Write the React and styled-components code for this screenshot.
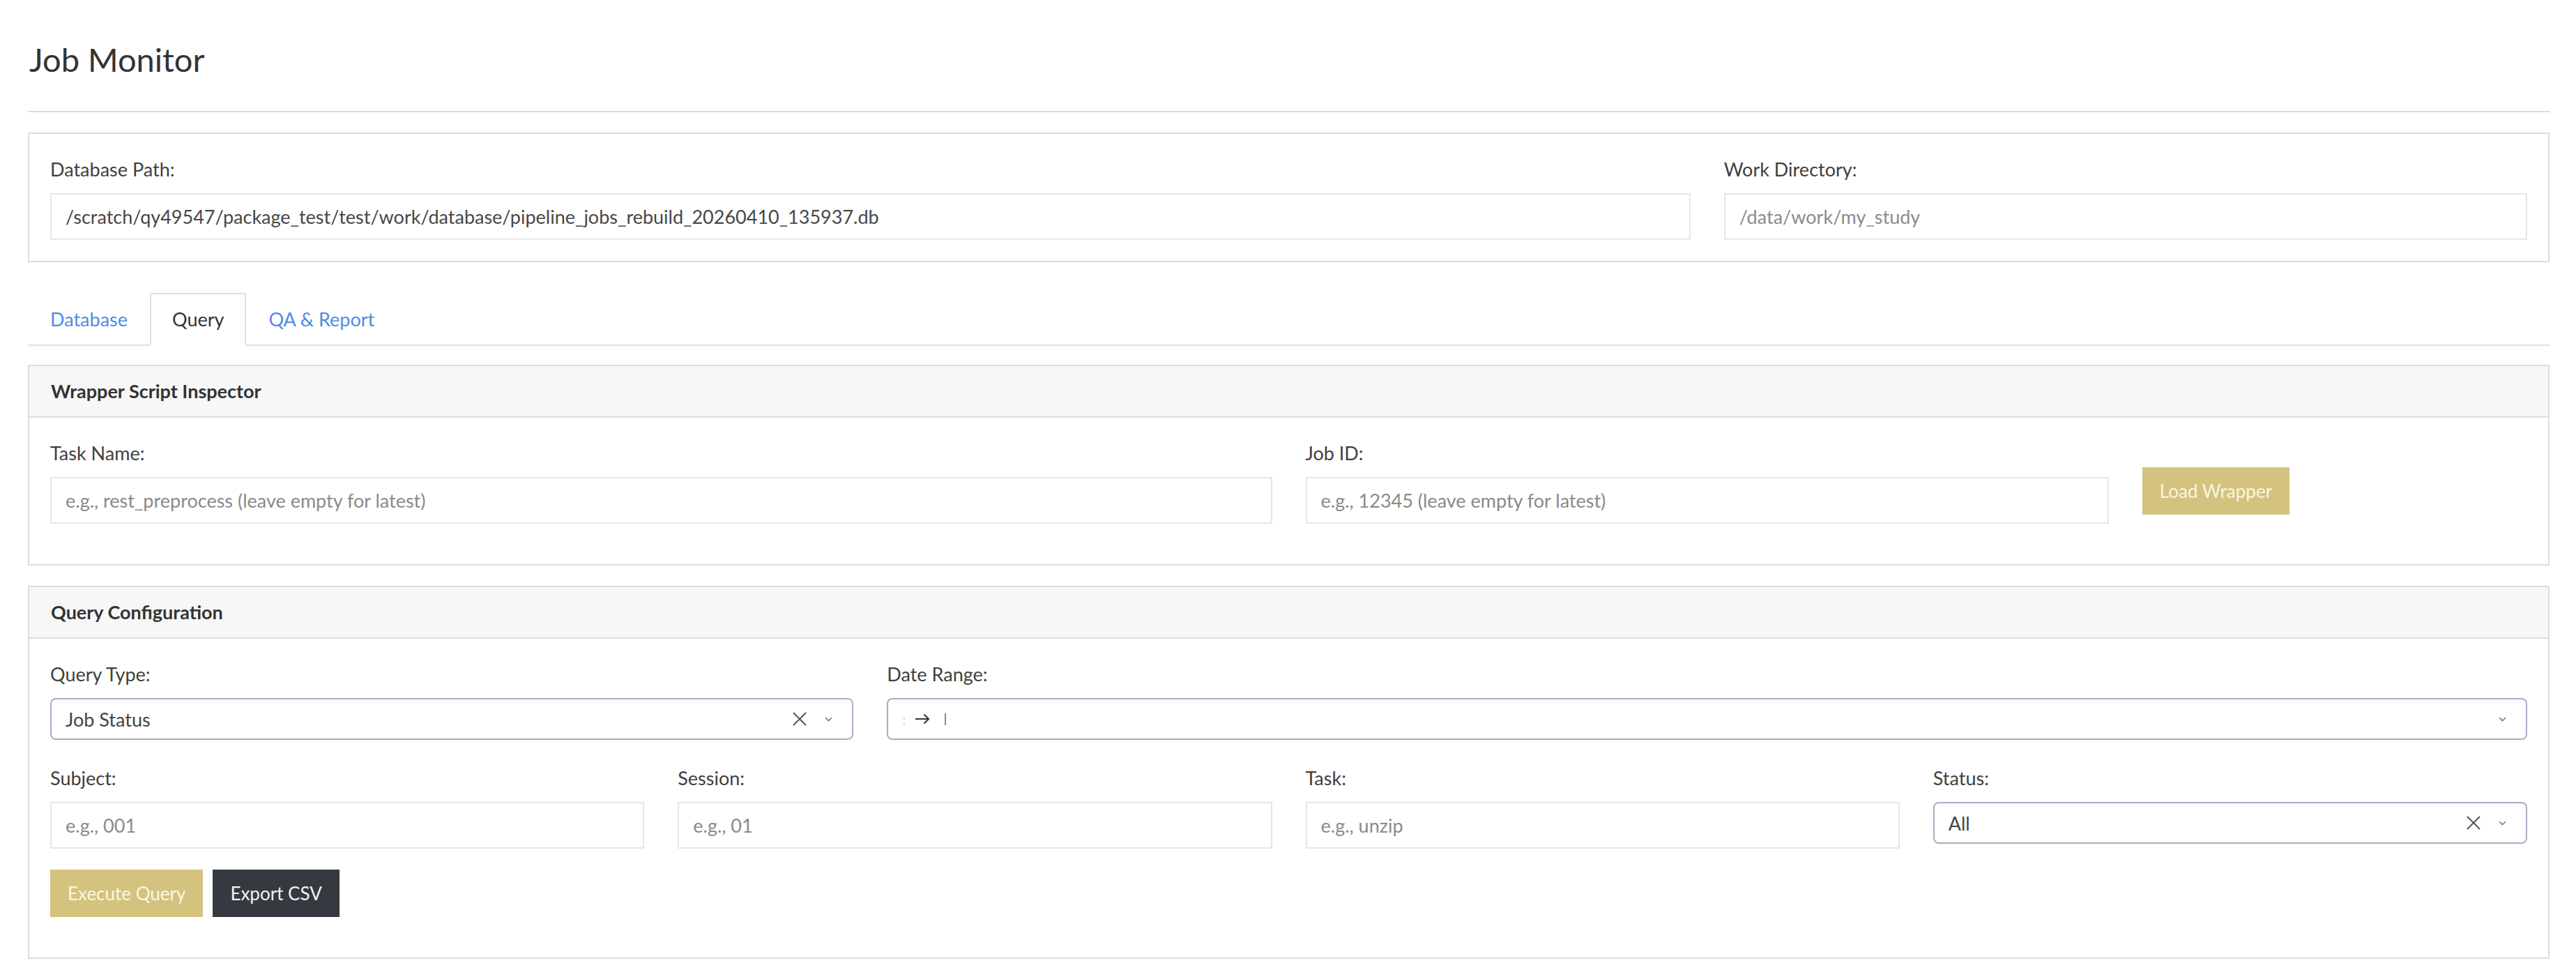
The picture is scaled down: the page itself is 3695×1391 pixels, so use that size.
import React from "react";
import styled, { createGlobalStyle } from "styled-components";

const GlobalStyle = createGlobalStyle`
  html, body {
    margin: 0;
    padding: 0;
    background: #fff;
  }
  body {
    font-family: Lato, "Noto Sans", "Liberation Sans", sans-serif;
    color: #404040;
  }
  * {
    box-sizing: border-box;
  }
`;

const Page = styled.div`
  padding: 55px 38px 20px 40px;
`;

const Title = styled.h1`
  margin: 0;
  padding-left: 2px;
  font-size: 47px;
  line-height: 60px;
  font-weight: 400;
  color: #333;
`;

const Divider = styled.hr`
  margin: 44px 0 29px;
  border: 0;
  border-top: 2px solid #dddddd;
`;

const Panel = styled.div`
  border: 2px solid #dddddd;
  padding: 30px;
`;

const Row = styled.div`
  display: flex;
  margin: 0 -24px;
  & + & {
    margin-top: 34px;
  }
`;

const Col = styled.div`
  flex: 0 0 ${(p) => (p.$span / 12) * 100}%;
  max-width: ${(p) => (p.$span / 12) * 100}%;
  padding: ${(p) => (p.$top ? `${p.$top}px` : 0)} 24px 0;
`;

const Label = styled.label`
  display: block;
  margin-bottom: 13px;
  font-size: 27px;
  line-height: 42px;
  color: #404040;
`;

const TextInput = styled.input`
  display: block;
  width: 100%;
  height: 67px;
  padding: 0 20px;
  border: 2px solid #e4e6eb;
  border-radius: 0;
  background: #fff;
  font-family: inherit;
  font-size: 27px;
  color: #474747;
  outline: none;
  &::placeholder {
    color: #8a8a8a;
  }
`;

const TabBar = styled.div`
  display: flex;
  margin: 44px 0 27px;
  border-bottom: 2px solid #dee2e6;
`;

const Tab = styled.div`
  margin-bottom: -2px;
  padding: 15px 30px;
  border: 2px solid transparent;
  border-color: ${(p) => (p.$active ? "#dee2e6 #dee2e6 #fff" : "transparent")};
  background: ${(p) => (p.$active ? "#fff" : "transparent")};
  font-size: 27px;
  line-height: 42px;
  color: ${(p) => (p.$active ? "#333" : "#4f8ae6")};
  cursor: pointer;
`;

const Card = styled.div`
  border: 2px solid #dddddd;
  & + & {
    margin-top: 29px;
  }
`;

const CardHeader = styled.div`
  padding: 15px 31px;
  background: #f7f7f7;
  border-bottom: 2px solid #dddddd;
  font-size: 27px;
  line-height: 42px;
  font-weight: 700;
  color: #333;
`;

const CardBody = styled.div`
  padding: 30px 30px 58px;
`;

const Button = styled.button`
  height: 68px;
  padding: 0 23px;
  border: 2px solid transparent;
  border-radius: 0;
  background: ${(p) => (p.$variant === "dark" ? "#343a40" : "#d3c37e")};
  color: ${(p) => (p.$variant === "dark" ? "#f2f2f2" : "#fbf6e3")};
  font-family: inherit;
  font-size: 26px;
  line-height: 42px;
  cursor: pointer;
`;

const ButtonRow = styled.div`
  display: flex;
  gap: 14px;
  margin-top: 30px;
`;

const SelectBox = styled.div`
  display: flex;
  align-items: center;
  height: 60px;
  padding: 0 28px 0 20px;
  border: 2px solid #a9aec6;
  border-radius: 8px;
  background: #fff;
  font-size: 27px;
  color: #444;
`;

const SelectValue = styled.span`
  flex: 1;
  display: flex;
  align-items: center;
`;

const ClearIcon = styled.svg`
  margin-right: 26px;
`;

const RangeStart = styled.span`
  width: 18px;
  color: #d2d2d2;
  font-size: 22px;
`;

const RangeCaret = styled.span`
  width: 2px;
  height: 17px;
  margin-left: 21px;
  background: #8a8a8a;
`;

function Field({ label, children }) {
  return (
    <div>
      <Label>{label}</Label>
      {children}
    </div>
  );
}

function Clear() {
  return (
    <ClearIcon width="20" height="20" viewBox="0 0 20 20">
      <path d="M1 1 L19 19 M19 1 L1 19" stroke="#555" strokeWidth="2" fill="none" />
    </ClearIcon>
  );
}

function Chevron() {
  return (
    <svg width="11" height="7" viewBox="0 0 11 7">
      <path d="M1 1 L5.5 5.5 L10 1" stroke="#777" strokeWidth="1.6" fill="none" />
    </svg>
  );
}

function Select({ value, clearable }) {
  return (
    <SelectBox>
      <SelectValue>{value}</SelectValue>
      {clearable && <Clear />}
      <Chevron />
    </SelectBox>
  );
}

function DateRange() {
  return (
    <SelectBox>
      <SelectValue>
        <RangeStart>:</RangeStart>
        <svg width="22" height="16" viewBox="0 0 22 16">
          <path d="M1 8 H20 M13.5 1.5 L20 8 L13.5 14.5" stroke="#3a3a3a" strokeWidth="2.2" fill="none" />
        </svg>
        <RangeCaret />
      </SelectValue>
      <Chevron />
    </SelectBox>
  );
}

export default function App() {
  return (
    <Page>
      <GlobalStyle />
      <Title>Job Monitor</Title>
      <Divider />

      <Panel>
        <Row>
          <Col $span={8}>
            <Field label="Database Path:">
              <TextInput defaultValue="/scratch/qy49547/package_test/test/work/database/pipeline_jobs_rebuild_20260410_135937.db" />
            </Field>
          </Col>
          <Col $span={4}>
            <Field label="Work Directory:">
              <TextInput placeholder="/data/work/my_study" />
            </Field>
          </Col>
        </Row>
      </Panel>

      <TabBar>
        <Tab>Database</Tab>
        <Tab $active>Query</Tab>
        <Tab>QA &amp; Report</Tab>
      </TabBar>

      <Card>
        <CardHeader>Wrapper Script Inspector</CardHeader>
        <CardBody>
          <Row>
            <Col $span={6}>
              <Field label="Task Name:">
                <TextInput placeholder="e.g., rest_preprocess (leave empty for latest)" />
              </Field>
            </Col>
            <Col $span={4}>
              <Field label="Job ID:">
                <TextInput placeholder="e.g., 12345 (leave empty for latest)" />
              </Field>
            </Col>
            <Col $span={2} $top={41}>
              <Button>Load Wrapper</Button>
            </Col>
          </Row>
        </CardBody>
      </Card>

      <Card>
        <CardHeader>Query Configuration</CardHeader>
        <CardBody>
          <Row>
            <Col $span={4}>
              <Field label="Query Type:">
                <Select value="Job Status" clearable />
              </Field>
            </Col>
            <Col $span={8}>
              <Field label="Date Range:">
                <DateRange />
              </Field>
            </Col>
          </Row>
          <Row>
            <Col $span={3}>
              <Field label="Subject:">
                <TextInput placeholder="e.g., 001" />
              </Field>
            </Col>
            <Col $span={3}>
              <Field label="Session:">
                <TextInput placeholder="e.g., 01" />
              </Field>
            </Col>
            <Col $span={3}>
              <Field label="Task:">
                <TextInput placeholder="e.g., unzip" />
              </Field>
            </Col>
            <Col $span={3}>
              <Field label="Status:">
                <Select value="All" clearable />
              </Field>
            </Col>
          </Row>
          <ButtonRow>
            <Button>Execute Query</Button>
            <Button $variant="dark">Export CSV</Button>
          </ButtonRow>
        </CardBody>
      </Card>
    </Page>
  );
}
